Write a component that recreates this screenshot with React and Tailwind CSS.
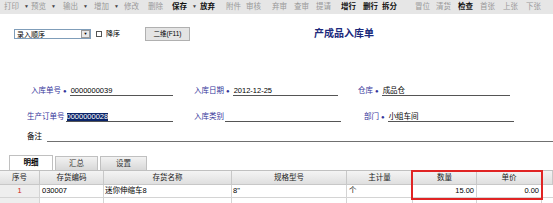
const font = { fontFamily: '"Liberation Sans", "Noto Sans CJK SC", sans-serif' };

const tools = [
  { t: '打印', arrow: true, w: 'w-[31px]', pl: 'pl-[4px]' },
  { t: '预览', arrow: true, w: 'w-[32px]' },
  { t: '输出', arrow: true, w: 'w-[31px]' },
  { t: '增加', arrow: true, w: 'w-[30px]' },
  { t: '修改', w: 'w-[24px]' },
  { t: '删除', w: 'w-[24px]' },
  { t: '保存', arrow: true, on: true, w: 'w-[28px]' },
  { t: '放弃', on: true, w: 'w-[26px]' },
  { t: '附件', w: 'w-[20px]' },
  { t: '审核', w: 'w-[26px]' },
  { t: '弃审', w: 'w-[22px]' },
  { t: '查审', w: 'w-[22px]' },
  { t: '提请', w: 'w-[25px]' },
  { t: '增行', on: true, w: 'w-[22px]' },
  { t: '删行', on: true, w: 'w-[19px]' },
  { t: '拆分', on: true, w: 'w-[33px]' },
  { t: '冒位', w: 'w-[21px]' },
  { t: '清货', w: 'w-[22px]' },
  { t: '检查', on: true, w: 'w-[22px]' },
  { t: '首张', w: 'w-[23px]' },
  { t: '上张', w: 'w-[23px]' },
  { t: '下张', w: 'w-[23px]' },
];

function Field({ label, star, value, w, hl }) {
  return (
    <div className={`flex items-end ${w}`}>
      <span className="text-[#34349a] whitespace-nowrap leading-none pb-[2px]">{label}</span>
      {star && <span className="text-[#34349a] px-[2px] leading-none pb-[2px] text-[6px]">●</span>}
      <div className="flex-1 border-b border-[#555] h-[12px] flex items-end pl-[1px] ml-[1px]">
        {value && (
          <span className={`leading-none pb-[1px] whitespace-nowrap ${hl ? 'bg-[#0a246a] text-white' : 'text-black'}`}>
            {value}
          </span>
        )}
      </div>
    </div>
  );
}

const cols = 'grid grid-cols-[40px_64px_128px_115px_66px_64px_65px_11px]';

export default function App() {
  return (
    <div className="relative w-[553px] h-[203px] overflow-hidden bg-white text-[7.5px] text-black" style={font}>
      {/* toolbar */}
      <div className="flex items-center h-[14px] bg-[#e6e6e6] text-[7.5px]">
        {tools.map((it, i) => (
          <div key={i} className={`flex items-center shrink-0 ${it.w} ${it.pl || ''}`}>
            <span className={it.on ? 'font-bold text-[#111]' : 'text-[#999]'}>{it.t}</span>
            {it.arrow && <span className="ml-[5px] text-[5px] text-[#444]">▼</span>}
          </div>
        ))}
      </div>

      {/* sort / title row */}
      <div className="flex items-center h-[24px] mt-[8px]">
        <div className="ml-[14px] w-[77px] h-[10px] border border-[#7f9db9] bg-white flex items-center justify-between">
          <span className="pl-[2px] leading-none text-[7px]">录入顺序</span>
          <span className="w-[9px] h-[8px] bg-[#e8e8e8] border border-[#999] flex items-center justify-center text-[4px] leading-none">▼</span>
        </div>
        <div className="ml-[5px] w-[6px] h-[6px] border border-[#555] bg-white" />
        <span className="ml-[4px] text-[7px]">降序</span>
        <div className="ml-[25px] w-[45px] h-[14px] bg-[#e4e4e4] border border-[#b0b0b0] flex items-center justify-center text-[6.5px]">
          二维(F11)
        </div>
        <div className="ml-[124px] text-[10px] font-bold text-[#1c2a7c] leading-none">产成品入库单</div>
      </div>

      {/* header fields */}
      <div className="flex items-end h-[14px] mt-[36px] pl-[31px]">
        <Field label="入库单号" star value="0000000039" w="w-[142px]" />
        <div className="w-[21px]" />
        <Field label="入库日期" star value="2012-12-25" w="w-[144px]" />
        <div className="w-[20px]" />
        <Field label="仓库" star value="成品仓" w="w-[152px]" />
      </div>
      <div className="flex items-end h-[14px] mt-[12px] pl-[27px]">
        <Field label="生产订单号" value="0000000028" hl w="w-[146px]" />
        <div className="w-[21px]" />
        <Field label="入库类别" w="w-[147px]" />
        <div className="w-[23px]" />
        <Field label="部门" star value="小组车间" w="w-[150px]" />
      </div>
      <div className="flex items-end h-[14px] mt-[6px] pl-[27px]">
        <span className="leading-none pb-[2px] text-black">备注</span>
        <div className="flex-1 ml-[5px] border-b border-[#707070]" />
      </div>

      {/* tabs */}
      <div className="flex items-end h-[15px] mt-[13px] pl-[9px] gap-[2px]">
        <div className="w-[44px] h-[15px] bg-white border border-[#c0c0c0] border-b-0 flex items-center justify-center font-bold">明细</div>
        <div className="w-[43px] h-[14px] bg-gradient-to-b from-[#f2f2f2] to-[#d8d8d8] border border-[#c0c0c0] border-b-0 flex items-center justify-center text-[#333]">汇总</div>
        <div className="w-[47px] h-[14px] bg-gradient-to-b from-[#f2f2f2] to-[#d8d8d8] border border-[#c0c0c0] border-b-0 flex items-center justify-center text-[#333]">设置</div>
      </div>

      {/* table */}
      <div className="border-t border-[#c0c0c0]">
        <div className={`${cols} h-[14px] bg-gradient-to-b from-[#f4f4f4] to-[#dedede] text-[#222]`}>
          {['序号', '存货编码', '存货名称', '规格型号', '主计量', '数量', '单价', ''].map((h, i) => (
            <div key={i} className="border-r border-b border-[#c8c8c8] flex items-center justify-center">{h}</div>
          ))}
        </div>
        <div className={`${cols} h-[13px]`}>
          <div className="border-r border-b border-[#d4d4d4] bg-[#eeeeee] flex items-center justify-center text-[#d02020]">1</div>
          <div className="border-r border-b border-[#d4d4d4] flex items-center pl-[2px]">030007</div>
          <div className="border-r border-b border-[#d4d4d4] flex items-center pl-[1px]">迷你伸缩车8</div>
          <div className="border-r border-b border-[#d4d4d4] flex items-center pl-[1px]">8"</div>
          <div className="border-r border-b border-[#d4d4d4] flex items-center pl-[2px]">个</div>
          <div className="border-r border-b border-[#d4d4d4] flex items-center justify-end pr-[2px]">15.00</div>
          <div className="border-r border-b border-[#d4d4d4] flex items-center justify-end pr-[2px]">0.00</div>
          <div className="border-b border-[#d4d4d4]" />
        </div>
        <div className={`${cols} h-[13px]`}>
          <div className="border-r border-[#d4d4d4] bg-[#eeeeee]" />
          <div className="border-r border-[#d4d4d4]" />
          <div className="border-r border-[#d4d4d4]" />
          <div className="border-r border-[#d4d4d4]" />
          <div className="border-r border-[#d4d4d4]" />
          <div className="border-r border-[#d4d4d4]" />
          <div className="border-r border-[#d4d4d4]" />
          <div />
        </div>
      </div>

      {/* red annotation box */}
      <div className="absolute left-[411px] top-[170px] w-[132px] h-[30px] border-2 border-[#e02424]" />
    </div>
  );
}
